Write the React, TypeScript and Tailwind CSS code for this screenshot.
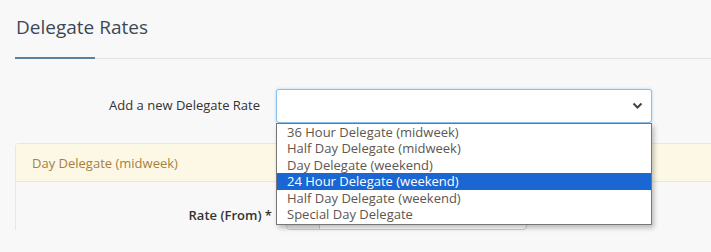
import React from "react";

const options = [
  "36 Hour Delegate (midweek)",
  "Half Day Delegate (midweek)",
  "Day Delegate (weekend)",
  "24 Hour Delegate (weekend)",
  "Half Day Delegate (weekend)",
  "Special Day Delegate",
];

export default function App() {
  return (
    <div
      className="w-[711px] h-[252px] overflow-hidden bg-[#f8f8f8] text-[#333]"
      style={{ fontFamily: '"Open Sans", "DejaVu Sans", sans-serif' }}
    >
      <div className="pl-[15px] w-[740px]">
        <div className="relative pt-[15px] h-[59px] border-b border-[#e3e3e3]">
          <h1 className="pl-[1px] text-[19px] leading-[24px] font-medium text-[#3c4858]">Delegate Rates</h1>
          <div className="absolute left-0 bottom-[-1px] w-[80px] h-[2px] bg-[#5a7fa0]" />
        </div>

        <div className="flex items-center mt-[30px] h-[34px]">
          <div className="w-[245px] text-right text-[13px] text-[#333]">Add a new Delegate Rate</div>
          <div className="relative ml-[16px] w-[376px] h-[34px]">
            <div className="w-full h-full rounded-[3px] border border-[#8cc0ec] bg-white shadow-[0_0_3px_rgba(102,175,233,0.5)] flex items-center justify-end pr-[8px]">
              <svg width="11" height="8" viewBox="0 0 11 8">
                <path d="M1.5 1.5 L5.5 5.5 L9.5 1.5" stroke="#444" strokeWidth="2" fill="none" />
              </svg>
            </div>
            <div className="absolute left-0 top-[34px] w-[376px] bg-white border border-[#767676] shadow-[2px_3px_5px_rgba(0,0,0,0.25)] z-10 pb-[2px]">
              {options.map((o, i) => (
                <div
                  key={o}
                  className={
                    "h-[16.4px] leading-[16px] pl-[10px] text-[13px] whitespace-nowrap " +
                    (i === 3 ? "bg-[#1a66d2] text-white" : "text-[#5e5650]")
                  }
                >
                  {o}
                </div>
              ))}
            </div>
          </div>
        </div>

        <div className="mt-[20px] rounded-tl-[4px] border-l border-t border-[#f6e7bf]">
          <div className="h-[38px] bg-[#fcf8e5] border-b border-[#f6e7bf] flex items-center pl-[16px] pt-[2px] text-[13px] text-[#a7803b]">
            Day Delegate (midweek)
          </div>
          <div className="flex items-start pt-[24px]">
            <div className="w-[256px] text-right text-[13px] font-semibold text-[#333]">Rate (From) *</div>
            <div className="ml-[14px] mt-[-10px] w-[241px] h-[34px] rounded-[4px] border border-[#ccc] bg-white flex">
              <div className="w-[33px] h-full bg-[#eee] border-r border-[#ccc] rounded-l-[4px]" />
            </div>
          </div>
        </div>
      </div>
    </div>
  );
}
